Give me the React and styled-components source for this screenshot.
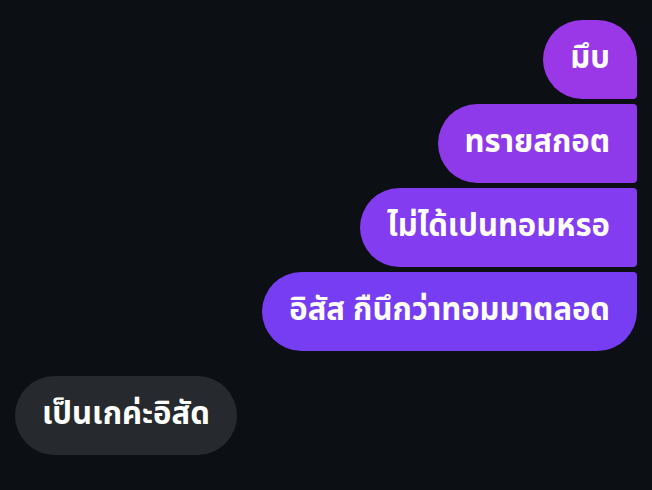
import React from "react";
import styled, { createGlobalStyle } from "styled-components";

const Global = createGlobalStyle`
  html, body { margin: 0; padding: 0; background: #0c1014; }
  body { font-family: "Noto Sans", "Noto Sans Thai", "Inter", sans-serif; }
`;

const Page = styled.div`
  width: 652px;
  height: 490px;
  background: #0c1014;
  box-sizing: border-box;
  padding: 20px 15px 0 15px;
  display: flex;
  flex-direction: column;
`;

const Group = styled.div`
  display: flex;
  flex-direction: column;
  align-items: ${(p) => (p.$mine ? "flex-end" : "flex-start")};
  gap: 5px;
  margin-bottom: 25px;
`;

const Bubble = styled.div`
  height: 79px;
  box-sizing: border-box;
  display: flex;
  align-items: center;
  padding: 0 27px 2px 27px;
  color: #fff;
  font-size: 31px;
  font-weight: 700;
  white-space: nowrap;
  border-radius: ${(p) => p.$radius};
  background: ${(p) => p.$bg};
`;

const msgs = [
  { t: "มึบ", r: "40px 40px 4px 40px", bg: "#9a38e8" },
  { t: "ทรายสกอต", r: "40px 4px 4px 40px", bg: "#8e3aeb" },
  { t: "ไม่ได้เปนทอมหรอ", r: "40px 4px 4px 40px", bg: "#833cef" },
  { t: "อิสัส กืนึกว่าทอมมาตลอด", r: "40px 4px 40px 40px", bg: "#773df2" },
];

export default function App() {
  return (
    <Page>
      <Global />
      <Group $mine>
        {msgs.map((m) => (
          <Bubble key={m.t} $radius={m.r} $bg={m.bg}>
            {m.t}
          </Bubble>
        ))}
      </Group>
      <Group>
        <Bubble $radius="40px" $bg="#262a2e">
          เป็นเกค่ะอิสัด
        </Bubble>
      </Group>
    </Page>
  );
}
